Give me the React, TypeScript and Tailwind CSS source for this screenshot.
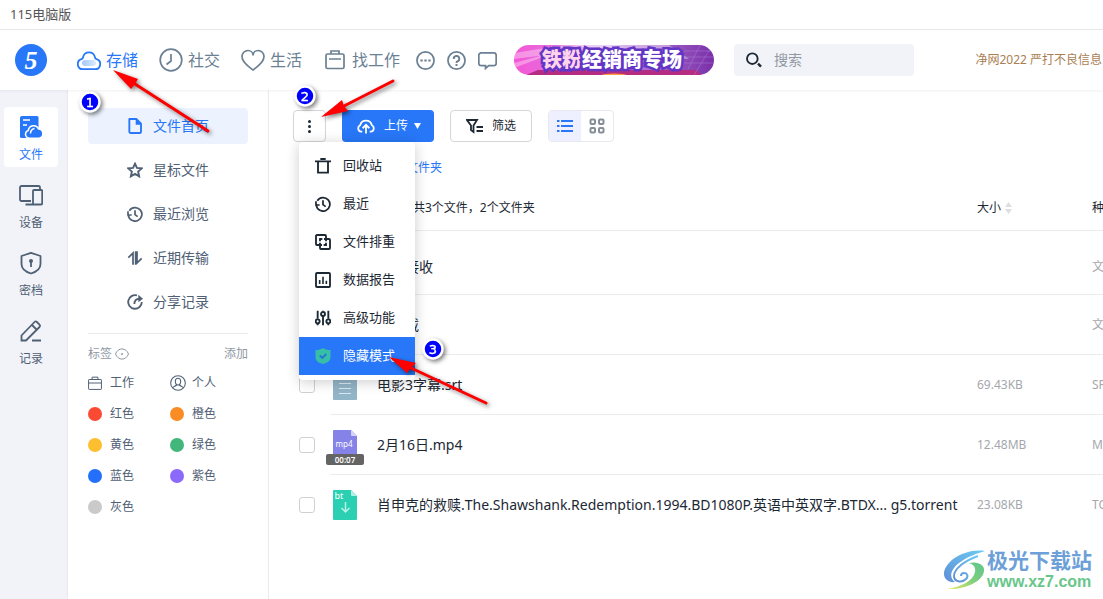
import { useState } from "react";
import type { ReactNode } from "react";

type IconProps = { size?: number; box?: number; width?: number; className?: string; children: ReactNode };

function Icon({ size = 16, box = 24, width = 2, className = "", children }: IconProps) {
  return (
    <svg
      width={size}
      height={size}
      viewBox={`0 0 ${box} ${box}`}
      fill="none"
      stroke="currentColor"
      strokeWidth={width}
      className={`shrink-0 ${className}`}
      aria-hidden="true"
    >
      {children}
    </svg>
  );
}

const topNav = [
  {
    label: "存储",
    icon: (
      <Icon size={24} width={1.8}>
        <defs>
          <linearGradient id="cloud" x1="0" x2="1">
            <stop offset="0" stopColor="#a5c9fb" />
            <stop offset="1" stopColor="#dbe9fd" />
          </linearGradient>
        </defs>
        <path d="M6 21.200a5.100 5.100 0 0 1-1.500-10c1-.4 1.500-1 1.600-2a6 6 0 0 1 11.800 0c.1 1 .6 1.600 1.600 2a5.100 5.100 0 0 1-1.500 10z" />
        <rect x="5" y="12" width="14" height="6" rx="3" fill="url(#cloud)" stroke="none" />
      </Icon>
    ),
  },
  {
    label: "社交",
    icon: (
      <Icon size={24} width={1.7}>
        <circle cx="12" cy="12" r="10.800" />
        <path d="M12 6v7l-4.500 3.500" />
      </Icon>
    ),
  },
  {
    label: "生活",
    icon: (
      <Icon size={24} width={1.7}>
        <path d="M12 22C8 19 1 14.500 1 8.500a6 6 0 0 1 6-6c2.500 0 5 1.800 5 5 0-3.200 2.500-5 5-5a6 6 0 0 1 6 6c0 6-7 10.500-11 13.500z" />
      </Icon>
    ),
  },
  {
    label: "找工作",
    icon: (
      <Icon size={24} width={1.7}>
        <rect x="3" y="6" width="18" height="14.500" rx="1.500" />
        <path d="M8 6V3h8v3M6 11h12" />
      </Icon>
    ),
  },
];

const sections = [
  {
    label: "文件",
    icon: (
      <svg width="24" height="24" viewBox="0 0 24 24" aria-hidden="true">
        <path d="M3 1h15a1.500 1.500 0 0 1 1.500 1.500V23H2.500A1.500 1.500 0 0 1 1 21.500V3a2 2 0 0 1 2-2z" fill="#2777f8" />
        <path d="M4 5h7M4 10h4" stroke="#fff" strokeWidth="1.600" />
        <path
          d="M10.500 23.200a4 4 0 0 1-2.800-6.800c.5-.6 1.100-.9 1.600-1a5.400 5.400 0 0 1 10.300-1.500 4.700 4.700 0 0 1 .4 9.300z"
          fill="#2777f8"
          stroke="#fff"
          strokeWidth="1.500"
        />
        <path d="M11.500 18.500c0-3 1.500-4.500 4-5" stroke="#fff" strokeWidth="1.500" fill="none" />
      </svg>
    ),
  },
  {
    label: "设备",
    icon: (
      <Icon size={24} width={1.8}>
        <path d="M12 18H2.500A1.500 1.500 0 0 1 1 16.500v-12A1.500 1.500 0 0 1 2.500 3h17A1.500 1.500 0 0 1 21 4.500V6M6.500 21.500h8" />
        <rect x="14" y="7" width="9.200" height="14.500" rx="1" />
      </Icon>
    ),
  },
  {
    label: "密档",
    icon: (
      <Icon size={24} width={1.8}>
        <path d="M12 1.800 21.500 5v8c0 5-4.500 8-9.500 9.500C7 21 2.500 18 2.500 13V5z" strokeLinejoin="round" />
        <circle cx="12" cy="10" r="2" fill="currentColor" stroke="none" />
        <path d="M12 10v6" />
      </Icon>
    ),
  },
  {
    label: "记录",
    icon: (
      <Icon size={24} width={1.8}>
        <path d="M2.500 21.500v-5L15.500 3a1.700 1.700 0 0 1 2.400 0l2.600 2.600a1.700 1.700 0 0 1 0 2.400L7 21.500zM13 6l5 5M13 21.500h9" />
      </Icon>
    ),
  },
];

const clock = (
  <Icon width={2.6}>
    <path d="M3.500 7A10.200 10.200 0 1 1 2 14M1.500 8v5.500H7M12 6.500V13l4 3" />
  </Icon>
);

const fileNav = [
  {
    label: "文件首页",
    icon: (
      <Icon width={2.8}>
        <path d="M3.500 1.500h10.500l7 7v12a2 2 0 0 1-2 2h-13.500a2 2 0 0 1-2-2z" strokeLinejoin="round" />
        <path d="M13 1v9h9z" fill="currentColor" stroke="none" />
      </Icon>
    ),
  },
  {
    label: "星标文件",
    icon: (
      <Icon width={2.8}>
        <path d="m12 2.500 2.900 6.300 7.300.8-5.500 4.700 1.500 7.200-6.200-3.700-6.200 3.700 1.500-7.200-5.500-4.700 7.300-.8z" />
      </Icon>
    ),
  },
  { label: "最近浏览", icon: clock },
  {
    label: "近期传输",
    icon: (
      <Icon width={2.8}>
        <path d="M2 11.500 9 4.500V22M15 2v17.500l7-7M13 22V2" strokeWidth="2.600" />
      </Icon>
    ),
  },
  {
    label: "分享记录",
    icon: (
      <Icon width={2.8}>
        <path d="M15 2.200A10.200 10.200 0 1 0 22.200 12M11 15c0-5 2.500-7.500 8-8" />
        <path d="m17 1 7 6-7 5.500z" fill="currentColor" stroke="none" />
      </Icon>
    ),
  },
];

const tags = [
  { label: "红色", dot: "bg-[#fb4a33]" },
  { label: "橙色", dot: "bg-[#f98c25]" },
  { label: "黄色", dot: "bg-[#fdbf30]" },
  { label: "绿色", dot: "bg-[#43b67c]" },
  { label: "蓝色", dot: "bg-[#2470fa]" },
  { label: "紫色", dot: "bg-[#8b6afb]" },
  { label: "灰色", dot: "bg-[#cacaca]" },
];

const menuItems = [
  {
    label: "回收站",
    icon: (
      <Icon width={2.8}>
        <path d="M0 5h24M8 1.500h8M4.500 5v17h15V5" />
      </Icon>
    ),
  },
  { label: "最近", icon: clock },
  {
    label: "文件排重",
    icon: (
      <Icon width={2.8}>
        <path d="M7 16.500H3A1.500 1.500 0 0 1 1.500 15V3A1.500 1.500 0 0 1 3 1.500h12A1.500 1.500 0 0 1 16.500 3v4M17 7.500h4A1.500 1.500 0 0 1 22.500 9v12a1.500 1.500 0 0 1-1.500 1.500H9A1.500 1.500 0 0 1 7.500 21v-4M7.500 11V7.500H11M13.500 7.500h3V11M16.500 13v3.500H13M10.500 16.500h-3V13" />
      </Icon>
    ),
  },
  {
    label: "数据报告",
    icon: (
      <Icon width={2.8}>
        <rect x="1.500" y="1.500" width="21" height="21" rx="1.500" />
        <path d="M7 12v6M12 7v11M17 13v5" strokeWidth="2.400" />
      </Icon>
    ),
  },
  {
    label: "高级功能",
    icon: (
      <Icon width={2.8}>
        <path d="M4 1v12M4 20v3M12 1v1M12 9v14M20 1v12M20 20v3" />
        <circle cx="4" cy="17" r="3" />
        <circle cx="12" cy="6" r="3" />
        <circle cx="20" cy="17" r="3" />
      </Icon>
    ),
  },
  {
    label: "隐藏模式",
    icon: (
      <svg width="16" height="16" viewBox="0 0 16 16" className="shrink-0" aria-hidden="true">
        <path d="M8 0c2 1.500 4.500 2 7.500 2v7c0 4-3.500 6-7.500 7-4-1-7.500-3-7.500-7V2C3.500 2 6 1.500 8 0z" fill="#36bfa6" />
        <path d="m4.800 7.500 2.500 2.500 4-4" fill="none" stroke="#2672d8" strokeWidth="1.800" />
      </svg>
    ),
  },
];

const files = [
  { name: "我的接收", size: "", kind: "文件夹", type: "folder" },
  { name: "云下载", size: "", kind: "文件夹", type: "folder" },
  { name: "电影3字幕.srt", size: "69.43KB", kind: "SRT", type: "srt" },
  { name: "2月16日.mp4", size: "12.48MB", kind: "MP4", type: "mp4" },
  {
    name: "肖申克的救赎.The.Shawshank.Redemption.1994.BD1080P.英语中英双字.BTDX... g5.torrent",
    size: "23.08KB",
    kind: "TORRENT",
    type: "bt",
  },
];

function FileIcon({ type }: { type: string }) {
  if (type === "folder") {
    return (
      <svg width="24" height="30" viewBox="0 0 24 30" aria-hidden="true">
        <path d="M0 7a2 2 0 0 1 2-2h6l3 3h11a2 2 0 0 1 2 2v13a2 2 0 0 1-2 2H2a2 2 0 0 1-2-2z" fill="#ffc94d" />
      </svg>
    );
  }
  if (type === "srt") {
    return (
      <svg width="24" height="30" viewBox="0 0 24 30" aria-hidden="true">
        <path d="M1 0h17l6 6v23a1 1 0 0 1-1 1H1a1 1 0 0 1-1-1V1a1 1 0 0 1 1-1z" fill="#93b5c8" />
        <path d="M6 13.500h12M6 18.500h12M6 23.500h12" stroke="#dbe8ef" />
      </svg>
    );
  }
  if (type === "mp4") {
    return (
      <div className="relative h-[30px] w-6">
        <svg width="24" height="30" viewBox="0 0 24 30" aria-hidden="true">
          <path d="M1 0h17l6 6v23a1 1 0 0 1-1 1H1a1 1 0 0 1-1-1V1a1 1 0 0 1 1-1z" fill="#8683e8" />
          <path d="M18 0v5a1 1 0 0 0 1 1h5z" fill="#d6d5f8" />
          <text x="11" y="17" textAnchor="middle" fontSize="8" fill="#fff">
            mp4
          </text>
        </svg>
        <span className="absolute top-6 -left-[7px] h-[11px] w-[38px] rounded-xs bg-[#646464] text-center text-[8px] leading-[11px] font-semibold text-white">
          00:07
        </span>
      </div>
    );
  }
  return (
    <svg width="24" height="30" viewBox="0 0 24 30" aria-hidden="true">
      <path d="M1 0h17l6 6v23a1 1 0 0 1-1 1H1a1 1 0 0 1-1-1V1a1 1 0 0 1 1-1z" fill="#2bd0b2" />
      <path d="M18 0v5a1 1 0 0 0 1 1h5z" fill="#b0efe3" />
      <text x="1.500" y="9" fontSize="9" fill="#fff">
        bt
      </text>
      <path d="M12.500 12v10M8.500 18l4 4 4-4" fill="none" stroke="#b9f3e8" strokeWidth="1.500" />
    </svg>
  );
}

function Header() {
  return (
    <header className="relative z-10 flex h-[60px] items-center bg-white pl-[15px] whitespace-nowrap text-[#6b8092] shadow-[0_1px_3px_rgba(0,0,0,0.06)]">
      <a
        href="#home"
        className="flex size-8 shrink-0 items-center justify-center rounded-full bg-[#2777f8] font-['Liberation_Serif',serif] text-[26px] font-bold text-white italic"
      >
        5
      </a>
      <nav className="ml-[30px] flex items-center gap-[21px]">
        {topNav.map((item, i) => (
          <a
            key={item.label}
            href="#nav"
            className={`flex items-center gap-[5px] text-base ${i === 0 ? "text-[#2777f8]" : ""}`}
          >
            {item.icon}
            {item.label}
          </a>
        ))}
      </nav>
      <div className="ml-4 flex shrink-0 gap-3">
        <button type="button" aria-label="更多">
          <Icon size={19} width={2.2}>
            <circle cx="12" cy="12" r="10.800" />
            <path d="M5.500 12h3M10.500 12h3M15.500 12h3" strokeWidth="2.800" />
          </Icon>
        </button>
        <button type="button" aria-label="帮助">
          <Icon size={19} width={2.2}>
            <circle cx="12" cy="12" r="10.800" />
            <path d="M8.500 10a3.500 3.500 0 1 1 4.500 3.200c-.8.3-1 .8-1 1.800M12 16.500V19" strokeWidth="2.400" />
          </Icon>
        </button>
        <button type="button" aria-label="消息">
          <Icon size={19} width={2.2}>
            <path d="M4 2.500h16a3 3 0 0 1 3 3v10a3 3 0 0 1-3 3h-6.500l-4 3.500v-3.500H4a3 3 0 0 1-3-3v-10a3 3 0 0 1 3-3z" />
          </Icon>
        </button>
      </div>
      <a
        href="#promo"
        className="relative ml-[17px] flex h-[30px] w-[200px] shrink-0 items-center justify-center overflow-hidden rounded-full bg-linear-to-r from-[#f554d6] via-[#c58ae6] to-[#7a2fa8] text-xl font-black"
      >
        <svg className="absolute inset-0 size-full" viewBox="0 0 200 30" aria-hidden="true">
          <path d="M0 8 50 0h60L0 14zM0 18l45-12L0 23z" fill="#fff" opacity=".35" />
          <path d="M60 0h95l20 14-80-6z" fill="#fff" opacity=".4" />
          <path d="m12 30 12-5h158l6 5z" fill="#b52d80" />
          <path d="m174 24 12-24M180 30l16-26M166 6h34M168 12h32M170 18h30" stroke="#b68be0" strokeWidth=".7" opacity=".6" />
          <ellipse cx="100" cy="30" rx="12" ry="1.500" fill="#ff9d45" />
        </svg>
        <span className="relative mr-1 text-white [paint-order:stroke_fill] [-webkit-text-stroke:5px_#6336c6]">
          <span className="text-[#ffd3ec]">铁粉</span>经销商专场
        </span>
      </a>
      <label className="ml-5 flex h-8 w-[180px] shrink-0 items-center gap-3 rounded bg-[#f2f3f8] px-3 text-[#1c2834]">
        <Icon size={16}>
          <circle cx="9.500" cy="10" r="8" strokeWidth="2.800" />
          <path d="m18 17.500 4.500 4.500" strokeWidth="3.600" />
        </Icon>
        <input
          type="search"
          aria-label="搜索"
          placeholder="搜索"
          className="w-full bg-transparent text-sm outline-none placeholder:text-[#8f98a3]"
        />
      </label>
      <a href="#notice" className="ml-auto shrink-0 pr-px text-xs text-[#a97e53]">
        净网2022 严打不良信息
      </a>
    </header>
  );
}

function SectionBar() {
  return (
    <nav className="flex w-[68px] shrink-0 flex-col gap-2 border-r border-[#e7e9ee] bg-[#f2f3f8] pt-[17px] pl-1 text-xs text-[#4f6075]">
      {sections.map((item, i) => (
        <a
          key={item.label}
          href="#section"
          className={`flex h-[60px] w-[54px] flex-col items-center gap-2 rounded pt-2 ${
            i === 0 ? "bg-white text-[#2777f8]" : ""
          }`}
        >
          {item.icon}
          {item.label}
        </a>
      ))}
    </nav>
  );
}

function FilePanel() {
  return (
    <aside className="w-[201px] shrink-0 border-r border-[#e9ebee] pt-[18px] pr-5 pl-5 text-[#4f6075]">
      <nav className="flex flex-col gap-2 text-sm">
        {fileNav.map((item, i) => (
          <a
            key={item.label}
            href="#files"
            className={`flex h-9 items-center gap-[10px] rounded pl-[39px] ${
              i === 0 ? "bg-[#ecf3fe] text-[#2777f8]" : ""
            }`}
          >
            {item.icon}
            {item.label}
          </a>
        ))}
      </nav>
      <div className="mt-[13px] flex h-9 items-center justify-between border-t border-[#ececec] pt-1 text-xs text-[#8f98a3]">
        <button type="button" className="flex items-center gap-[3px]">
          标签
          <svg width="14" height="12" viewBox="0 0 14 12" fill="none" stroke="currentColor" aria-hidden="true">
            <path d="M.5 6C3-.8 11-.8 13.500 6 11 12.800 3 12.800.500 6z" />
            <circle cx="7" cy="6" r="1" fill="currentColor" stroke="none" />
          </svg>
        </button>
        <button type="button">添加</button>
      </div>
      <ul className="grid auto-rows-[31px] grid-cols-[82px_1fr] text-xs">
        <li>
          <a href="#tag" className="flex h-7 items-center gap-2">
            <Icon size={14} width={1.7}>
              <rect x="1" y="6" width="22" height="17" rx="1" />
              <path d="M7 6V2h10v4M1 12h22" />
            </Icon>
            工作
          </a>
        </li>
        <li>
          <a href="#tag" className="flex h-7 items-center gap-[6px]">
            <Icon size={16} width={1.6}>
              <circle cx="12" cy="12" r="11" />
              <path d="M12 5c-2.500 0-4 1.800-4 4.500S9.500 15 12 15s4-2.800 4-5.500S14.500 5 12 5zM4 19c2-2 4-2 6-4M20 19c-2-2-4-2-6-4" />
            </Icon>
            个人
          </a>
        </li>
        {tags.map((tag) => (
          <li key={tag.label}>
            <a href="#tag" className="flex h-7 items-center gap-2">
              <span className={`size-[14px] rounded-full ${tag.dot}`} />
              {tag.label}
            </a>
          </li>
        ))}
      </ul>
    </aside>
  );
}

function MoreMenu() {
  const [open, setOpen] = useState(true);

  return (
    <div className="relative">
      <button
        type="button"
        aria-label="更多操作"
        aria-expanded={open}
        onClick={() => setOpen(!open)}
        className="flex h-8 w-[33px] items-center justify-center rounded border border-[#d3d5d8]"
      >
        <svg width="3" height="13" viewBox="0 0 3 13" fill="#1c2834" aria-hidden="true">
          <circle cx="1.500" cy="1.500" r="1.500" />
          <circle cx="1.500" cy="6.500" r="1.500" />
          <circle cx="1.500" cy="11.500" r="1.500" />
        </svg>
      </button>
      {open && (
        <div className="absolute top-8 left-[6px] z-10 w-[116px] rounded bg-white py-[5px] shadow-[0_2px_14px_rgba(0,0,0,0.2)]">
          {menuItems.map((item, i) => (
            <button
              key={item.label}
              type="button"
              className={`flex h-[38px] w-full items-center gap-3 pl-4 text-[13px] ${
                i === 5 ? "bg-[#2777f8] text-white" : "text-[#1c2834]"
              }`}
            >
              {item.icon}
              {item.label}
            </button>
          ))}
        </div>
      )}
    </div>
  );
}

function Toolbar() {
  return (
    <div className="flex gap-4 px-6 text-xs">
      <MoreMenu />
      <button type="button" className="flex h-8 w-[92px] items-center rounded bg-[#2777f8] pl-[15px] text-white">
        <Icon size={18} width={2.4}>
          <path d="M7 19.500H5.500A4.500 4.500 0 0 1 4.200 11 8 8 0 0 1 19.800 11a4.500 4.500 0 0 1-1.300 8.500H17M12 22V11M7.500 15l4.500-4.500 4.500 4.500" />
        </Icon>
        <span className="mr-[6px] ml-[9px]">上传</span>
        <svg width="7" height="6" viewBox="0 0 7 6" fill="currentColor" aria-hidden="true">
          <path d="M0 0h7L3.500 6z" />
        </svg>
      </button>
      <button
        type="button"
        className="flex h-8 w-[82px] items-center gap-[9px] rounded border border-[#d3d5d8] pl-[15px] text-[#1c2834]"
      >
        <svg width="17" height="16" viewBox="0 0 17 16" fill="none" stroke="currentColor" strokeWidth="1.800" aria-hidden="true">
          <path d="M1 2h10L7.500 7.500V14L5 12V7.500zM10.500 9H17M10.500 13H17" />
        </svg>
        筛选
      </button>
      <div className="flex h-8 w-[66px] overflow-hidden rounded border border-[#e7e9ee]">
        <button type="button" aria-label="列表" className="flex flex-1 items-center justify-center bg-[#eef0ff] text-[#2777f8]">
          <svg width="16" height="14" viewBox="0 0 16 14" fill="none" stroke="currentColor" strokeWidth="2" aria-hidden="true">
            <path d="M4 2h12M4 7h12M4 12h12M0 2h2.500M0 7h2.500M0 12h2.500" />
          </svg>
        </button>
        <button type="button" aria-label="图标" className="flex flex-1 items-center justify-center text-[#868e98]">
          <svg width="16" height="16" viewBox="0 0 16 16" fill="none" stroke="currentColor" strokeWidth="2" aria-hidden="true">
            <rect x="1.500" y="1.500" width="4.500" height="4.500" rx="1" />
            <rect x="10" y="1.500" width="4.500" height="4.500" rx="1" />
            <rect x="1.500" y="10" width="4.500" height="4.500" rx="1" />
            <rect x="10" y="10" width="4.500" height="4.500" rx="1" />
          </svg>
        </button>
      </div>
    </div>
  );
}

function FileTable() {
  return (
    <table className="w-full min-w-[914px] table-fixed border-separate border-spacing-0 text-left whitespace-nowrap text-[#1c2834]">
      <colgroup>
        <col className="w-[61px]" />
        <col />
        <col className="w-[115px]" />
        <col className="w-[91px]" />
      </colgroup>
      <thead className="text-xs">
        <tr>
          <th className="h-[46px] pl-[30px]">
            <input
              type="checkbox"
              aria-label="全选"
              className="block size-4 appearance-none rounded-[3px] border border-[#cfd1d4] checked:bg-[#2777f8]"
            />
          </th>
          <th className="border-b border-[#ececec] pl-[83px] font-normal">共3个文件，2个文件夹</th>
          <th className="border-b border-[#ececec] font-normal">
            <button type="button" className="flex items-center gap-1">
              大小
              <svg width="7" height="12" viewBox="0 0 7 12" fill="#dcdee0" aria-hidden="true">
                <path d="M0 5h7L3.500 0zM0 7h7l-3.500 5z" />
              </svg>
            </button>
          </th>
          <th className="border-b border-[#ececec] font-normal">种类</th>
        </tr>
      </thead>
      <tbody className="text-xs text-[#a4a7ac] [&>tr:first-child>td]:h-16 [&>tr:first-child>td]:pt-2 [&>tr:last-child>td]:border-0">
        {files.map((file) => (
          <tr key={file.name}>
            <td className="h-[60px] pl-[30px]">
              <input
                type="checkbox"
                aria-label={file.name}
                className="block size-4 appearance-none rounded-[3px] border border-[#cfd1d4] checked:bg-[#2777f8]"
              />
            </td>
            <td className="border-b border-[#ececec] pl-[3px]">
              <div className="flex items-center gap-5 text-sm text-[#1c2834]">
                <FileIcon type={file.type} />
                {file.name}
              </div>
            </td>
            <td className="border-b border-[#ececec]">{file.size}</td>
            <td className="border-b border-[#ececec]">{file.kind}</td>
          </tr>
        ))}
      </tbody>
    </table>
  );
}

// red arrows and numbered steps drawn over the page
function Steps() {
  const steps = [
    { n: "1", x: 90, y: 102, line: "M135 84 208 131", head: "113,70 138,79 135,84 131,89" },
    { n: "2", x: 305, y: 96, line: "M344 106 393 81", head: "321,117 342,100 344,106 348,111" },
    { n: "3", x: 433, y: 349, line: "M411 368 486 403", head: "389,357 416,363 411,368 407,373" },
  ];

  return (
    <svg
      width="500"
      height="420"
      className="pointer-events-none absolute top-0 left-0 z-20 drop-shadow-[2px_2px_2px_rgba(0,0,0,0.5)]"
      aria-hidden="true"
    >
      {steps.map((s) => (
        <g key={s.n}>
          <path d={s.line} stroke="#fe0000" strokeWidth="3" strokeLinecap="round" />
          <polygon points={s.head} fill="#fe0000" />
          <circle cx={s.x} cy={s.y} r="9.500" fill="#0000fe" stroke="#fff" strokeWidth="2.500" />
          <text
            x={s.x}
            y={s.y + 5}
            textAnchor="middle"
            fontSize="13"
            fill="#fff"
            stroke="#fff"
            strokeWidth=".4"
            fontFamily="DejaVu Sans, sans-serif"
          >
            {s.n}
          </text>
        </g>
      ))}
    </svg>
  );
}

function SiteMark() {
  return (
    <div className="pointer-events-none absolute right-[11px] bottom-[7px] z-20 flex items-center gap-[2px]">
      <svg width="41" height="42" viewBox="0 0 41 42" aria-hidden="true">
        <defs>
          <linearGradient id="markBlue" x1="0" y1="1" x2="1" y2="0">
            <stop offset="0" stopColor="#5f8fd6" />
            <stop offset="1" stopColor="#6ccbf3" />
          </linearGradient>
          <linearGradient id="markGreen" x1="0" y1="1" x2="1" y2="0">
            <stop offset="0" stopColor="#e9ec62" />
            <stop offset=".5" stopColor="#82cf7d" />
            <stop offset="1" stopColor="#5cc58c" />
          </linearGradient>
        </defs>
        <path d="M41 2C20-1 0 13 0 25c0 5 5 9 11 8-6-4-5-12 4-19C23 8 31 5 41 2z" fill="url(#markBlue)" />
        <path
          d="M34 7C20 12 10 20 10 27c0 6 8 7 12 3 3-3 1-6-2-6-2 0-3 1-3 3"
          fill="none"
          stroke="url(#markBlue)"
          strokeWidth="2"
        />
        <path d="M25 14c9-2 16 2 15 8C39 32 22 41 3 40c14-2 26-8 28-17 1-5-2-8-6-9z" fill="url(#markGreen)" />
      </svg>
      <div className="whitespace-nowrap">
        <div className="text-[21px] leading-6 font-bold text-[#6d9fd8]">极光下载站</div>
        <div className="font-['Liberation_Sans',sans-serif] text-base leading-5 font-bold text-[#68c68b]">www.xz7.com</div>
      </div>
    </div>
  );
}

export default function App() {
  return (
    <div className="relative flex min-h-screen flex-col overflow-hidden bg-white font-['Noto_Sans','Noto_Sans_CJK_SC',sans-serif]">
      <div className="flex h-[30px] items-center border-b border-[#e9e9e9] pl-[10px] text-[13px] text-[#555]">115电脑版</div>
      <Header />
      <div className="flex flex-1">
        <SectionBar />
        <FilePanel />
        <main className="min-w-0 flex-1 overflow-hidden pt-5">
          <Toolbar />
          <div className="flex h-[43px] items-center pt-2 pl-[113px] text-xs text-[#2777f8]">
            <button type="button">新建文件夹</button>
          </div>
          <FileTable />
        </main>
      </div>
      <Steps />
      <SiteMark />
    </div>
  );
}
